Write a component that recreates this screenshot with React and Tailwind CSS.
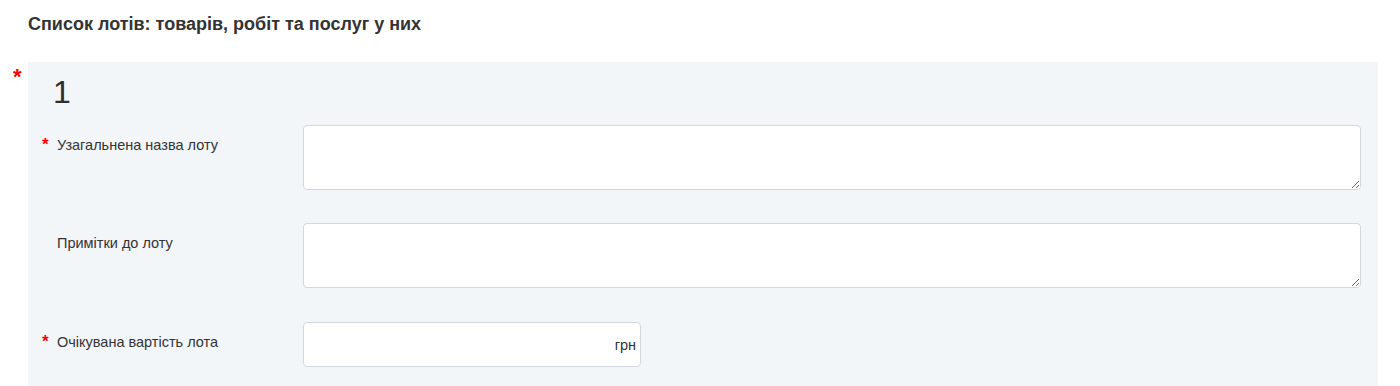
export default function App() {
  const rows = [
    { label: 'Узагальнена назва лоту', required: true, type: 'textarea' },
    { label: 'Примітки до лоту', required: false, type: 'textarea' },
    { label: 'Очікувана вартість лота', required: true, type: 'money' },
  ]

  return (
    <div className="min-h-screen bg-white font-['Liberation_Sans',Arial,sans-serif] text-[#333]">
      <h2 className="h-[62px] px-[28px] pt-[13px] text-[18px] font-bold leading-[22px]">
        Список лотів: товарів, робіт та послуг у них
      </h2>

      <div className="flex">
        <div className="w-[28px] shrink-0 pl-[13px] pt-[5px] text-[22px] font-bold leading-[20px] text-[#ff0000]">*</div>
        <div className="mr-[22px] flex-1 bg-[#f3f6f9] pb-[20px] pl-[14px] pr-[17px] pt-[14px]">
          <div className="mb-[17px] pl-[11px] text-[32px] leading-[32px] text-[#2b2f30]">1</div>

          <div className="flex flex-col gap-[33px]">
            {rows.map(row => (
              <div key={row.label} className={`flex items-start ${row.type === 'money' ? 'pt-[1px]' : ''}`}>
                <div className="flex w-[261px] shrink-0 pt-[10px] text-[14.5px] leading-[20px]">
                  <span className="w-[15px] shrink-0 text-[17px] font-bold text-[#ff0000]">{row.required ? '*' : ''}</span>
                  <span>{row.label}</span>
                </div>
                {row.type === 'textarea' ? (
                  <textarea className="block h-[65px] flex-1 rounded-[4px] border border-[#d3d8de] bg-white px-2 py-1 text-[14px] outline-none" />
                ) : (
                  <div className="flex h-[45px] w-[338px] items-center rounded-[4px] border border-[#d3d8de] bg-white pr-[4px]">
                    <input className="min-w-0 flex-1 bg-transparent px-2 text-[14px] outline-none" />
                    <span className="pt-[3px] text-[14.5px] text-[#333]">грн</span>
                  </div>
                )}
              </div>
            ))}
          </div>
        </div>
      </div>
    </div>
  )
}
